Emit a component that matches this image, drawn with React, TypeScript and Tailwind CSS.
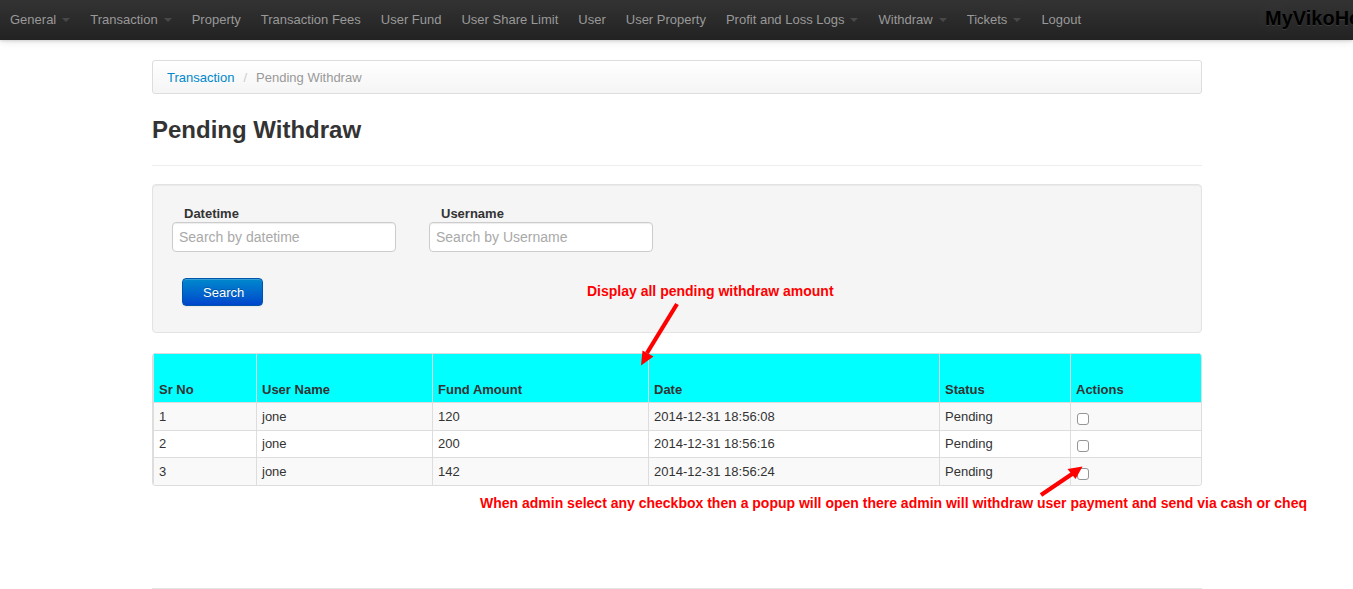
import React from "react";

type NavItem = { label: string; menu?: boolean };

const navItems: NavItem[] = [
  { label: "General", menu: true },
  { label: "Transaction", menu: true },
  { label: "Property" },
  { label: "Transaction Fees" },
  { label: "User Fund" },
  { label: "User Share Limit" },
  { label: "User" },
  { label: "User Property" },
  { label: "Profit and Loss Logs", menu: true },
  { label: "Withdraw", menu: true },
  { label: "Tickets", menu: true },
  { label: "Logout" },
];

const withdrawals = [
  { id: 1, user: "jone", amount: 120, date: "2014-12-31 18:56:08", status: "Pending" },
  { id: 2, user: "jone", amount: 200, date: "2014-12-31 18:56:16", status: "Pending" },
  { id: 3, user: "jone", amount: 142, date: "2014-12-31 18:56:24", status: "Pending" },
];

const columns = [
  { title: "Sr No", width: "w-[103px]" },
  { title: "User Name", width: "w-[176px]" },
  { title: "Fund Amount", width: "w-[216px]" },
  { title: "Date", width: "w-[291px]" },
  { title: "Status", width: "w-[131px]" },
  { title: "Actions", width: "w-[131px]" },
];

function Navbar() {
  return (
    <nav className="flex h-10 items-center overflow-x-clip bg-linear-to-b from-[#333] to-[#222] shadow-[0_1px_3px_rgba(0,0,0,0.15),0_1px_10px_rgba(0,0,0,0.1)]">
      <ul className="flex shrink-0">
        {navItems.map((item) => (
          <li key={item.label}>
            <a href="#" className="flex items-center px-2.5 whitespace-nowrap text-[#999]">
              {item.label}
              {item.menu && (
                <svg className="ml-1.5" width="8" height="4" viewBox="0 0 8 4" aria-hidden="true">
                  <path d="M0 0h8L4 4z" fill="#484848" />
                </svg>
              )}
            </a>
          </li>
        ))}
      </ul>
      <a
        href="#"
        className="ml-auto w-[88px] shrink-0 pb-1 text-xl/5 font-bold whitespace-nowrap text-black [text-shadow:0_1px_0_rgba(255,255,255,0.1),0_0_30px_rgba(255,255,255,0.125)]"
      >
        MyVikoHo
      </a>
    </nav>
  );
}

function SearchField({ id, label, placeholder }: { id: string; label: string; placeholder: string }) {
  return (
    <div className="flex w-56 flex-col">
      <label htmlFor={id} className="h-[18px] pl-3 leading-5 font-bold">
        {label}
      </label>
      <input
        id={id}
        type="text"
        placeholder={placeholder}
        className="h-[30px] rounded border border-[#ccc] bg-white px-1.5 text-sm shadow-[inset_0_1px_1px_rgba(0,0,0,0.075)] placeholder:text-[#a9a9a9]"
      />
    </div>
  );
}

function WithdrawTable() {
  return (
    <table className="mt-5 w-full table-fixed border-separate border-spacing-0 overflow-hidden rounded border-x border-b border-[#ddd] text-left">
      <thead>
        <tr className="h-[49px]">
          {columns.map((column) => (
            <th
              key={column.title}
              scope="col"
              className={`${column.width} border-t border-l border-[#ddd] bg-[#0ff] px-[5px] pt-1 pb-[3px] align-bottom`}
            >
              {column.title}
            </th>
          ))}
        </tr>
      </thead>
      <tbody className="[&_td]:border-t [&_td]:border-l [&_td]:border-[#ddd] [&_td]:px-[5px] [&_td]:py-1 [&_td]:align-top [&_tr:nth-child(odd)_td]:pt-[5px]">
        {withdrawals.map((row) => (
          <tr key={row.id} className="odd:bg-[#f9f9f9]">
            <td>{row.id}</td>
            <td>{row.user}</td>
            <td>{row.amount}</td>
            <td>{row.date}</td>
            <td>{row.status}</td>
            <td>
              <input
                type="checkbox"
                aria-label={`Withdraw ${row.id}`}
                className="mt-[5px] ml-px block size-3 appearance-none rounded-[3px] border border-[#959595] bg-white checked:bg-[#0088cc]"
              />
            </td>
          </tr>
        ))}
      </tbody>
    </table>
  );
}

function Annotations() {
  return (
    <div className="pointer-events-none absolute inset-0 text-sm/5 font-bold whitespace-nowrap text-[#f00]">
      <p className="absolute top-[221px] left-[435px]">Display all pending withdraw amount</p>
      <svg className="absolute top-[240px] left-[484px]" width="46" height="68" viewBox="0 0 46 68" aria-hidden="true">
        <path d="M41 4L11 53" stroke="#f00" strokeWidth="4.2" />
        <path d="M5 65.500L6.500 50.500L17.500 56.500z" fill="#f00" />
      </svg>
      <p className="absolute top-[433px] left-[328px]">
        When admin select any checkbox then a popup will open there admin will withdraw user payment and send via cash or cheq
      </p>
      <svg className="absolute top-[402px] left-[884px]" width="52" height="36" viewBox="0 0 52 36" aria-hidden="true">
        <path d="M5 33L39 10" stroke="#f00" strokeWidth="4.2" />
        <path d="M46.500 4.500L39.500 17L31.500 7z" fill="#f00" />
      </svg>
    </div>
  );
}

export default function App() {
  return (
    <div className="overflow-x-clip bg-white font-['Liberation_Sans',Arial,sans-serif] text-[13px]/[18px] text-[#333]">
      <Navbar />
      <div className="pl-px">
        <main className="relative mx-auto mt-5 max-w-[1050px]">
          <nav
            aria-label="Breadcrumb"
            className="flex rounded-[3px] border border-[#ddd] bg-linear-to-b from-white to-[#f5f5f5] px-3.5 pt-2 pb-1.5"
          >
            <a href="#" className="text-[#08c]">
              Transaction
            </a>
            <span className="px-[9px] text-[#ccc]">/</span>
            <span className="text-[#999]">Pending Withdraw</span>
          </nav>
          <h1 className="my-[18px] border-b border-[#eee] pb-[17px] text-2xl/9 font-bold">Pending Withdraw</h1>
          <form
            className="rounded border border-[#e3e3e3] bg-[#f5f5f5] p-[19px] shadow-[inset_0_1px_1px_rgba(0,0,0,0.05)]"
            onSubmit={(event) => event.preventDefault()}
          >
            <div className="flex gap-[33px]">
              <SearchField id="datetime" label="Datetime" placeholder="Search by datetime" />
              <SearchField id="username" label="Username" placeholder="Search by Username" />
            </div>
            <button
              type="submit"
              className="mt-[26px] mb-[7px] ml-2.5 block h-7 rounded border border-[#05a] bg-linear-to-b from-[#08c] to-[#04c] pt-0.5 pr-[18px] pl-5 text-white shadow-[inset_0_1px_0_rgba(255,255,255,0.2),0_1px_2px_rgba(0,0,0,0.05)] [text-shadow:0_-1px_0_rgba(0,0,0,0.25)]"
            >
              Search
            </button>
          </form>
          <WithdrawTable />
          <Annotations />
        </main>
        <footer className="mx-auto mt-[102px] max-w-[1050px] border-t border-[#e5e5e5]" />
      </div>
    </div>
  );
}
